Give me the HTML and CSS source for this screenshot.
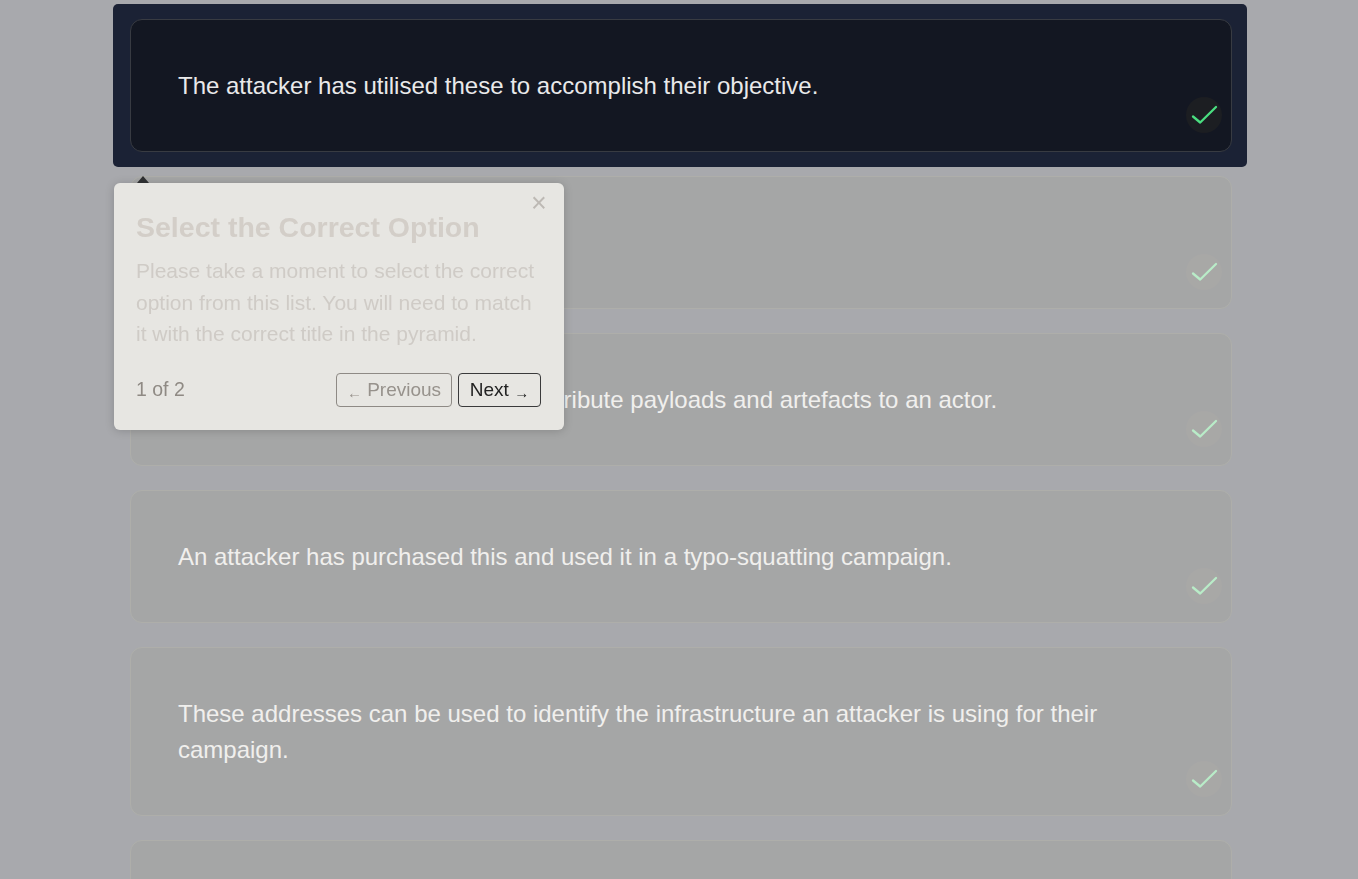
FILE: index.html
```html
<!DOCTYPE html>
<html lang="en">
<head>
<meta charset="utf-8">
<title>Pyramid of Pain</title>
<link rel="stylesheet" href="styles.css">
</head>
<body>
<main class="page">
  <div class="list">
    <div class="stage">
      <div class="card card--active">
        <p class="card__text">The attacker has utilised these to accomplish their objective.</p>
        <span class="check"><svg viewBox="0 0 36 36" width="36" height="36"><polyline points="7,19.5 14.2,25.5 30,10" /></svg></span>
      </div>
    </div>
    <div class="card">
      <p class="card__text">Observable traces left on a host.</p>
      <span class="check"><svg viewBox="0 0 36 36" width="36" height="36"><polyline points="7,19.5 14.2,25.5 30,10" /></svg></span>
    </div>
    <div class="card">
      <p class="card__text">These file hashes can be used to attribute payloads and artefacts to an actor.</p>
      <span class="check"><svg viewBox="0 0 36 36" width="36" height="36"><polyline points="7,19.5 14.2,25.5 30,10" /></svg></span>
    </div>
    <div class="card">
      <p class="card__text">An attacker has purchased this and used it in a typo-squatting campaign.</p>
      <span class="check"><svg viewBox="0 0 36 36" width="36" height="36"><polyline points="7,19.5 14.2,25.5 30,10" /></svg></span>
    </div>
    <div class="card">
      <p class="card__text">These addresses can be used to identify the infrastructure an attacker is using for their campaign.</p>
      <span class="check"><svg viewBox="0 0 36 36" width="36" height="36"><polyline points="7,19.5 14.2,25.5 30,10" /></svg></span>
    </div>
    <div class="card">
      <p class="card__text">Traffic patterns observed on the network that reveal the attacker's activity.</p>
      <span class="check"><svg viewBox="0 0 36 36" width="36" height="36"><polyline points="7,19.5 14.2,25.5 30,10" /></svg></span>
    </div>
  </div>
</main>

<div class="overlay"></div>

<div class="popover">
  <span class="popover__arrow"></span>
  <button class="popover__close" type="button">&#215;</button>
  <h2 class="popover__title">Select the Correct Option</h2>
  <p class="popover__desc">Please take a moment to select the correct option from this list. You will need to match it with the correct title in the pyramid.</p>
  <div class="popover__footer">
    <span class="popover__progress">1 of 2</span>
    <div class="popover__nav">
      <button class="btn btn--prev" type="button"><span class="btn__arrow">&#8592;</span> Previous</button>
      <button class="btn btn--next" type="button">Next <span class="btn__arrow">&#8594;</span></button>
    </div>
  </div>
</div>
</body>
</html>
```
FILE: styles.css
```css
* { box-sizing: border-box; }

html, body {
  margin: 0;
  padding: 0;
}

body {
  background: #1b2235;
  font-family: "Liberation Sans", Arial, sans-serif;
  color: #e9eaec;
  min-height: 100vh;
}

.page {
  padding: 19px 0 60px 130px;
}

.list {
  width: 1102px;
  display: flex;
  flex-direction: column;
  gap: 24px;
}

.stage {
  position: relative;
  z-index: 20;
  margin: -15px -15px -15px -17px;
  padding: 15px 15px 15px 17px;
  background: #1b2235;
  border-radius: 5px;
}

.card {
  display: flex;
  align-items: flex-end;
  background: #131722;
  border: 1px solid #2b302c;
  border-radius: 12px;
  padding: 48px 9px 18px 47px;
}

.card--active {
  border-color: #383b42;
}

.card__text {
  flex: 1;
  margin: 0 36px 29px 0;
  font-size: 24px;
  line-height: 36px;
  color: #e9e9ea;
}

.check {
  flex: none;
  width: 36px;
  height: 36px;
  border-radius: 50%;
  background: #1c1e22;
  display: flex;
}

.check svg {
  display: block;
}

.check polyline {
  fill: none;
  stroke: #4ade80;
  stroke-width: 2.3;
  stroke-linecap: round;
  stroke-linejoin: round;
}

.overlay {
  position: fixed;
  inset: 0;
  z-index: 10;
  background: rgba(245, 243, 238, 0.65);
}

.popover {
  position: absolute;
  top: 183px;
  left: 114px;
  width: 450px;
  z-index: 30;
  background: #e7e6e2;
  border-radius: 6px;
  padding: 26px 23px 23px 22px;
  box-shadow: 0 1px 10px rgba(0, 0, 0, 0.18);
}

.popover__arrow {
  position: absolute;
  top: -7px;
  left: 23px;
  width: 0;
  height: 0;
  border-left: 6px solid transparent;
  border-right: 6px solid transparent;
  border-bottom: 7px solid #2e2f31;
}

.popover__close {
  position: absolute;
  top: 6px;
  right: 13px;
  width: 24px;
  height: 28px;
  padding: 0;
  border: 0;
  background: transparent;
  font-family: "Liberation Sans", Arial, sans-serif;
  font-size: 27px;
  line-height: 28px;
  color: #bdb9b4;
}

.popover__title {
  margin: 0;
  font-size: 28.5px;
  line-height: 36px;
  font-weight: 700;
  color: #d3cec8;
}

.popover__desc {
  margin: 10px 0 0;
  font-size: 21px;
  line-height: 31.5px;
  color: #cfcbc6;
}

.popover__footer {
  display: flex;
  align-items: center;
  justify-content: space-between;
  margin-top: 23px;
}

.popover__progress {
  font-size: 19.5px;
  color: #8f8a84;
}

.popover__nav {
  display: flex;
  gap: 6px;
}

.btn {
  height: 34px;
  padding: 0 8px;
  border-radius: 4px;
  background: transparent;
  font-family: "Liberation Sans", Arial, sans-serif;
  font-size: 19px;
  line-height: 32px;
}

.btn__arrow {
  font-size: 15px;
  position: relative;
  top: 2px;
}

.btn--prev {
  width: 116px;
  border: 1px solid #8e8a85;
  color: #97928c;
}

.btn--next {
  width: 83px;
  border: 1px solid #3a3a3b;
  color: #222222;
}
```
